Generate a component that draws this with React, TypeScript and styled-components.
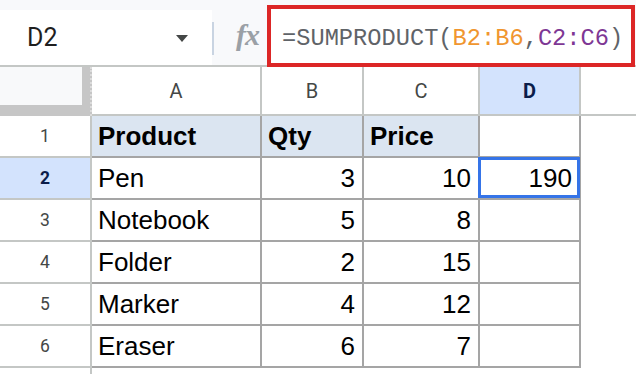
import React from "react";
import styled, { createGlobalStyle, css } from "styled-components";

const GlobalStyle = createGlobalStyle`
  html, body { margin: 0; padding: 0; background: #ffffff; }
  body { overflow: hidden; }
  * { box-sizing: border-box; }
`;

const Screen = styled.div`
  width: 636px;
  height: 374px;
  overflow: hidden;
  background: #ffffff;
  font-family: "Liberation Sans", Arial, sans-serif;
`;

const TopBar = styled.div`
  display: flex;
  height: 67px;
  background: #f8f9fb;
  border-bottom: 2px solid #c4c7c5;
`;

const NameBox = styled.div`
  width: 212px;
  height: 55px;
  margin-top: 10px;
  background: #ffffff;
  display: flex;
  align-items: center;
  justify-content: space-between;
  padding: 0 24px 0 27px;
`;

const NameText = styled.span`
  font-family: Roboto, "Liberation Sans", sans-serif;
  font-size: 25px;
  color: #1f1f1f;
`;

const Caret = styled.span`
  width: 0;
  height: 0;
  border-left: 6px solid transparent;
  border-right: 6px solid transparent;
  border-top: 7px solid #444746;
  margin-top: 2px;
`;

const Divider = styled.div`
  width: 2px;
  height: 33px;
  margin-top: 22px;
  background: #c9d4e2;
`;

const FxArea = styled.div`
  width: 53px;
  display: flex;
  align-items: center;
  padding-left: 22px;
  padding-top: 5px;
`;

const FxGlyph = styled.span`
  font-family: "Liberation Serif", "Times New Roman", serif;
  font-style: italic;
  font-weight: bold;
  font-size: 30px;
  color: #9aa0a6;
  letter-spacing: -1px;
`;

const FormulaBox = styled.div`
  flex: 1;
  margin-top: 5px;
  margin-right: 1px;
  height: 62px;
  border: 4px solid #dc2626;
  background: #ffffff;
  display: flex;
  align-items: center;
  padding: 5px 0 0 11px;
  font-family: "Liberation Mono", "DejaVu Sans Mono", monospace;
  font-size: 23.7px;
  white-space: nowrap;
`;

const tokenColors: Record<string, string> = {
  plain: "#5f6368",
  rangeA: "#f0962f",
  rangeB: "#7e3794",
};

const Token = styled.span<{ $kind: string }>`
  color: ${(p) => tokenColors[p.$kind]};
`;

const Sheet = styled.div`
  display: grid;
  grid-template-columns: 92px 170px 102px 116px 101px 1fr;
  grid-template-rows: 49px repeat(6, 42px) 20px;
`;

const Corner = styled.div`
  background: #c6c6c6;
  border-right: 2px dotted #dcdcdc;
`;

const CornerInner = styled.div`
  width: 82px;
  height: 38px;
  background: #f8f9fa;
`;

const activeHeader = css`
  background: #d3e3fd;
  color: #0b1d4a;
  font-weight: bold;
`;

const ColHeader = styled.div<{ $active?: boolean; $edge?: boolean }>`
  display: flex;
  align-items: center;
  justify-content: center;
  background: #ffffff;
  color: #444746;
  font-family: Roboto, "Liberation Sans", sans-serif;
  font-size: 20px;
  border-bottom: 2px solid #c4c7c5;
  border-right: ${(p) => (p.$edge ? "none" : "2px solid #c4c7c5")};
  ${(p) => p.$active && activeHeader}
`;

const RowHeader = styled.div<{ $active?: boolean }>`
  display: flex;
  align-items: center;
  justify-content: center;
  background: #ffffff;
  color: #444746;
  font-family: Roboto, "Liberation Sans", sans-serif;
  font-size: 17.5px;
  border-right: 2px solid #c4c7c5;
  border-bottom: 2px solid #c4c7c5;
  ${(p) => p.$active && activeHeader}
`;

const Cell = styled.div<{
  $fill?: boolean;
  $bold?: boolean;
  $num?: boolean;
  $selected?: boolean;
}>`
  position: relative;
  display: flex;
  align-items: flex-end;
  justify-content: ${(p) => (p.$num ? "flex-end" : "flex-start")};
  padding: 0 7px 7px 6px;
  font-size: 26px;
  line-height: 26px;
  color: #000000;
  font-weight: ${(p) => (p.$bold ? "bold" : "normal")};
  background: ${(p) => (p.$fill ? "#dbe5f1" : "#ffffff")};
  border-right: 2px solid #a5a5a5;
  border-bottom: 2px solid #a5a5a5;
  ${(p) =>
    p.$selected &&
    css`
      &::after {
        content: "";
        position: absolute;
        top: -1px;
        left: -2px;
        right: -1px;
        bottom: 0;
        border: 3px solid #3574e8;
        z-index: 1;
      }
    `}
`;

const Blank = styled.div``;

const formula: [string, string][] = [
  ["plain", "=SUMPRODUCT("],
  ["rangeA", "B2:B6"],
  ["plain", ","],
  ["rangeB", "C2:C6"],
  ["plain", ")"],
];

const columns = ["A", "B", "C", "D"];

const rows: { product: string; qty: string; price: string; total: string }[] = [
  { product: "Product", qty: "Qty", price: "Price", total: "" },
  { product: "Pen", qty: "3", price: "10", total: "190" },
  { product: "Notebook", qty: "5", price: "8", total: "" },
  { product: "Folder", qty: "2", price: "15", total: "" },
  { product: "Marker", qty: "4", price: "12", total: "" },
  { product: "Eraser", qty: "6", price: "7", total: "" },
];

export default function App() {
  return (
    <Screen>
      <GlobalStyle />
      <TopBar>
        <NameBox>
          <NameText>D2</NameText>
          <Caret />
        </NameBox>
        <Divider />
        <FxArea>
          <FxGlyph>fx</FxGlyph>
        </FxArea>
        <FormulaBox>
          {formula.map(([kind, text], i) => (
            <Token key={i} $kind={kind}>
              {text}
            </Token>
          ))}
        </FormulaBox>
      </TopBar>
      <Sheet>
        <Corner>
          <CornerInner />
        </Corner>
        {columns.map((c) => (
          <ColHeader key={c} $active={c === "D"}>
            {c}
          </ColHeader>
        ))}
        <ColHeader $edge />
        {rows.map((r, i) => {
          const header = i === 0;
          const selectedRow = i === 1;
          return (
            <React.Fragment key={i}>
              <RowHeader $active={selectedRow}>{i + 1}</RowHeader>
              <Cell $fill={header} $bold={header}>
                {r.product}
              </Cell>
              <Cell $fill={header} $bold={header} $num={!header}>
                {r.qty}
              </Cell>
              <Cell $fill={header} $bold={header} $num={!header}>
                {r.price}
              </Cell>
              <Cell $num $selected={selectedRow}>
                {r.total}
              </Cell>
              <Blank />
            </React.Fragment>
          );
        })}
        <RowHeader />
      </Sheet>
    </Screen>
  );
}
